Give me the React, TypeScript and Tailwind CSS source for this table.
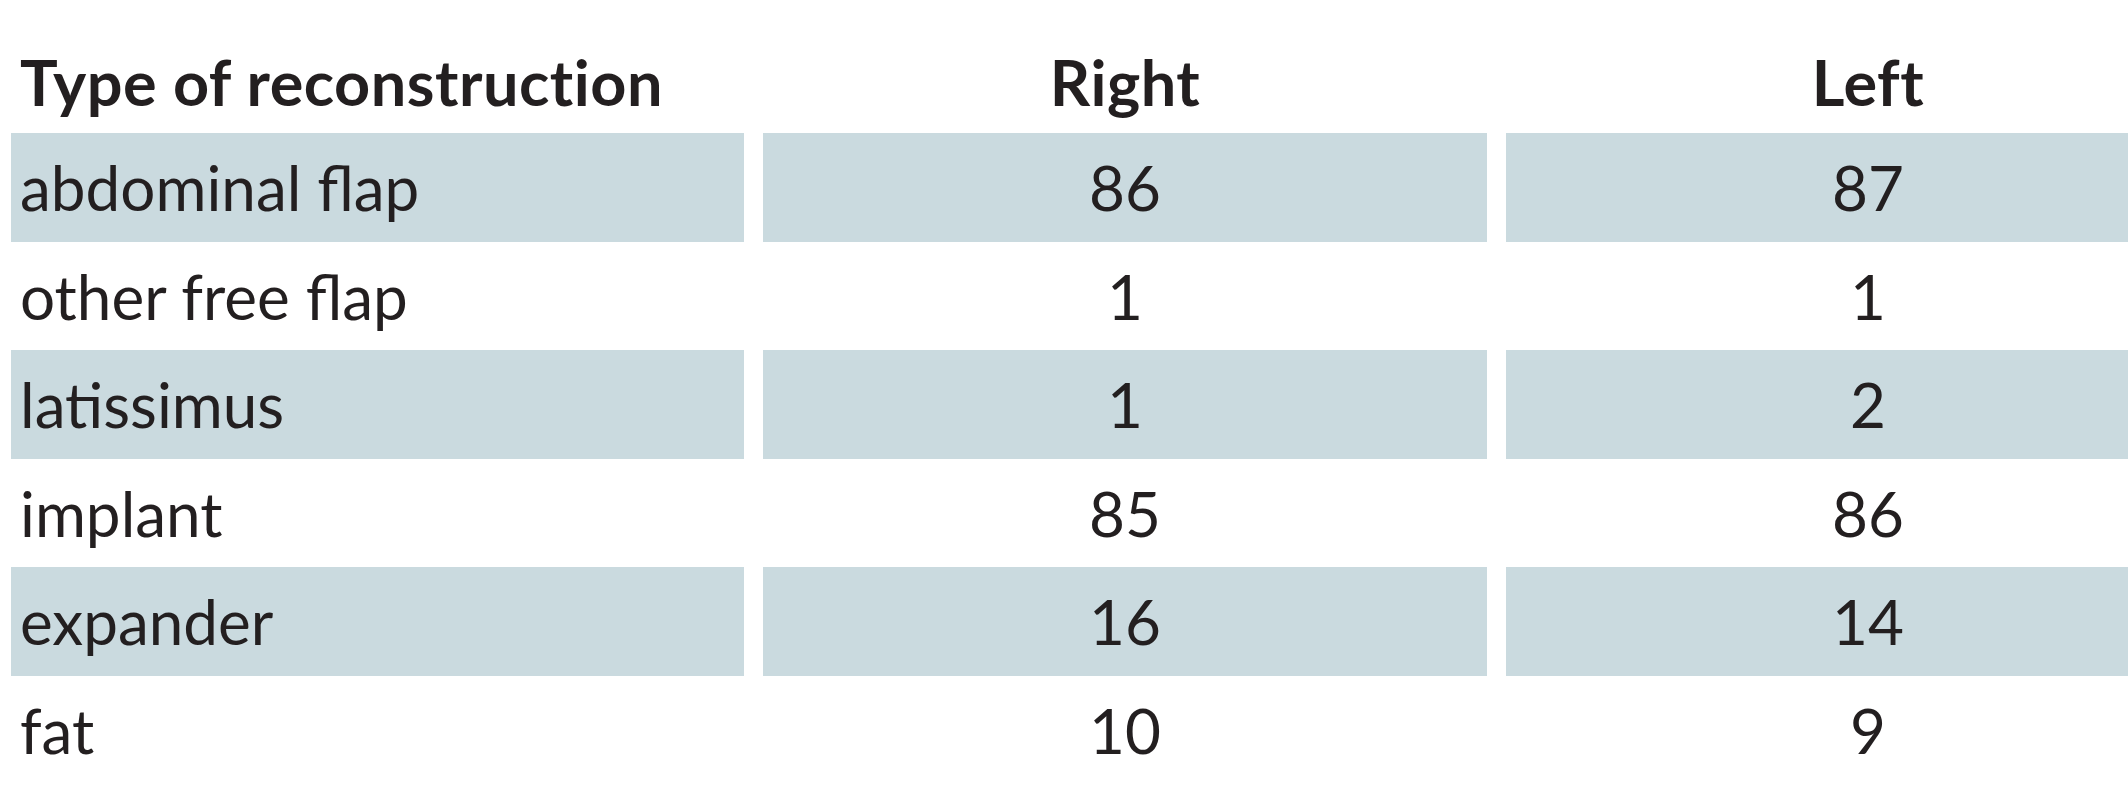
const rows = [
  { type: 'abdominal flap', right: '86', left: '87' },
  { type: 'other free flap', right: '1', left: '1' },
  { type: 'latissimus', right: '1', left: '2' },
  { type: 'implant', right: '85', left: '86' },
  { type: 'expander', right: '16', left: '14' },
  { type: 'fat', right: '10', left: '9' },
]

export default function App() {
  return (
    <div
      className="w-[2128px] h-[800px] overflow-hidden bg-white text-[#231f20]"
      style={{ fontFamily: 'Lato, "Liberation Sans", sans-serif' }}
    >
      <div className="grid grid-cols-[733px_724px_724px] gap-x-[19px] pl-[11px] w-max">

        {/* header */}
        <div className="h-[133px] flex items-end pb-[20px] pl-[9px] text-[63px] font-bold leading-none tracking-[0.5px]">
          Type of reconstruction
        </div>
        <div className="h-[133px] flex items-end justify-center pb-[20px] text-[63px] font-bold leading-none tracking-[0.5px]">
          Right
        </div>
        <div className="h-[133px] flex items-end justify-center pb-[20px] text-[63px] font-bold leading-none tracking-[0.5px]">
          Left
        </div>

        {/* body */}
        {rows.map((r, i) => {
          const band = i % 2 === 0 ? 'bg-[#cadadf]' : 'bg-white'
          return [
            <div key={r.type + 'a'} className={`h-[108.5px] flex items-center pl-[9px] text-[62px] leading-none ${band}`}>
              {r.type}
            </div>,
            <div key={r.type + 'b'} className={`h-[108.5px] flex items-center justify-center text-[62px] leading-none ${band}`}>
              {r.right}
            </div>,
            <div key={r.type + 'c'} className={`h-[108.5px] flex items-center justify-center text-[62px] leading-none ${band}`}>
              {r.left}
            </div>,
          ]
        })}

      </div>
    </div>
  )
}
